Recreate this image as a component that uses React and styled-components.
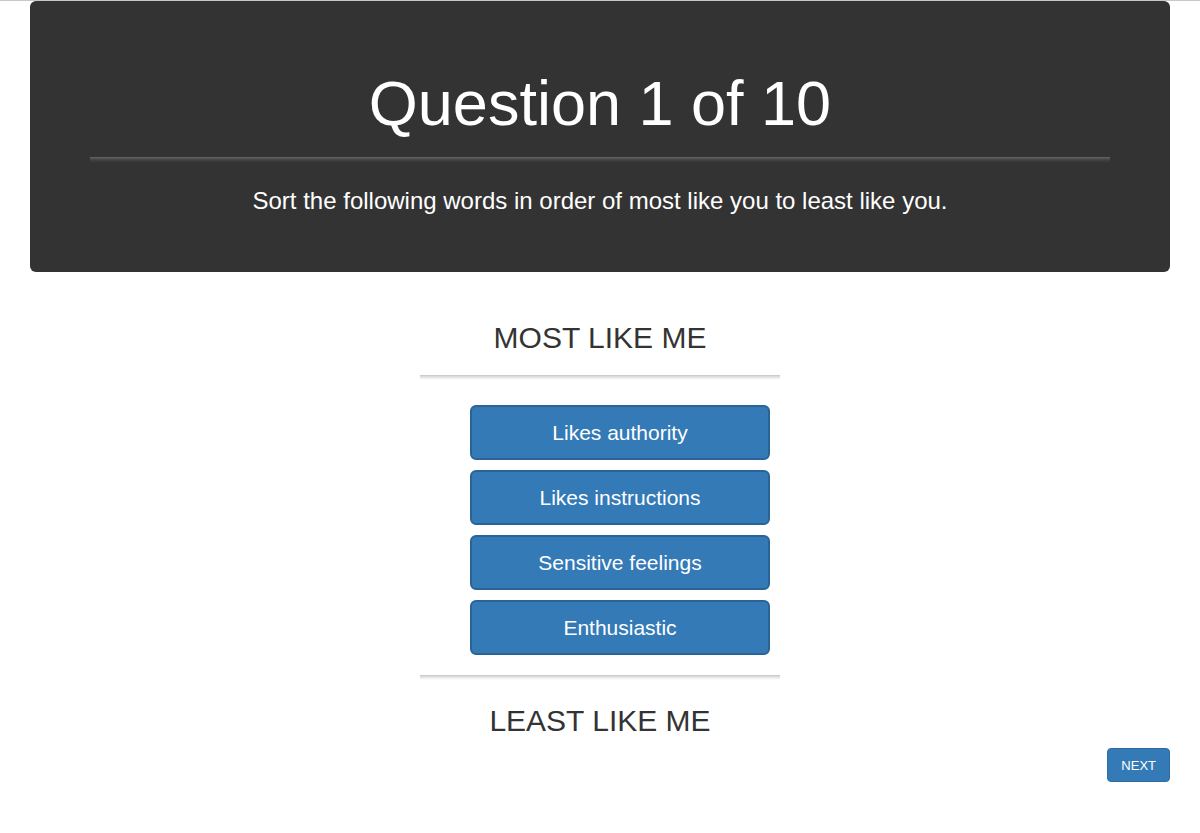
import React from "react";
import styled, { createGlobalStyle } from "styled-components";

const GlobalStyle = createGlobalStyle`
  html, body {
    margin: 0;
    padding: 0;
    background: #fff;
  }
  body {
    font-family: "Liberation Sans", Arial, sans-serif;
    color: #333;
    border-top: 1px solid #c8c8c8;
  }
`;

const words = [
  "Likes authority",
  "Likes instructions",
  "Sensitive feelings",
  "Enthusiastic",
];

function App() {
  return (
    <>
      <GlobalStyle />
      <Container>
        <Jumbotron>
          <Title>Question 1 of 10</Title>
          <DarkRule />
          <Lead>Sort the following words in order of most like you to least like you.</Lead>
        </Jumbotron>

        <Sorter>
          <SectionHeading>MOST LIKE ME</SectionHeading>
          <LightRule />
          <WordList>
            {words.map((w) => (
              <WordButton key={w}>{w}</WordButton>
            ))}
          </WordList>
          <LightRule $bottom />
          <SectionHeading $last>LEAST LIKE ME</SectionHeading>
        </Sorter>

        <Footer>
          <NextButton>NEXT</NextButton>
        </Footer>
      </Container>
    </>
  );
}

export default App;

const Container = styled.div`
  width: 1140px;
  margin: 0 auto;
`;

const Jumbotron = styled.div`
  background: #333333;
  border-radius: 6px;
  padding: 48px 60px 56px;
  text-align: center;
  color: #fff;
`;

const Title = styled.h1`
  margin: 20px 0 0;
  font-size: 63px;
  font-weight: 400;
  line-height: 69px;
`;

const DarkRule = styled.div`
  margin-top: 19px;
  height: 6px;
  background: linear-gradient(#666666, #4a4a4a 35%, #3a3a3a 70%, #333333);
`;

const Lead = styled.p`
  margin: 23px 0 0;
  font-size: 24px;
  line-height: 30px;
`;

const Sorter = styled.div`
  width: 360px;
  margin: 0 auto;
  padding-top: 49px;
  text-align: center;
`;

const SectionHeading = styled.h2`
  margin: 0;
  margin-top: ${(p) => (p.$last ? "24px" : "0")};
  font-size: 30px;
  font-weight: 400;
  line-height: 33px;
  color: #333;
`;

const LightRule = styled.div`
  margin-top: ${(p) => (p.$bottom ? "20px" : "21px")};
  height: 5px;
  background: linear-gradient(#c4c4c4, #dedede 35%, #f2f2f2 70%, #ffffff);
`;

const WordList = styled.div`
  display: flex;
  flex-direction: column;
  gap: 10px;
  padding: 25px 10px 0 50px;
`;

const WordButton = styled.div`
  box-sizing: border-box;
  height: 55px;
  display: flex;
  align-items: center;
  justify-content: center;
  background: #337ab7;
  border: 2px solid #2a6496;
  border-radius: 6px;
  color: #fff;
  font-size: 21px;
  cursor: move;
`;

const Footer = styled.div`
  display: flex;
  justify-content: flex-end;
  padding-top: 11px;
`;

const NextButton = styled.button`
  box-sizing: border-box;
  height: 34px;
  padding: 0 13px;
  background: #337ab7;
  border: 1px solid #2e6da4;
  border-radius: 4px;
  color: #fff;
  font-family: "Liberation Sans", Arial, sans-serif;
  font-size: 13px;
  cursor: pointer;
`;
